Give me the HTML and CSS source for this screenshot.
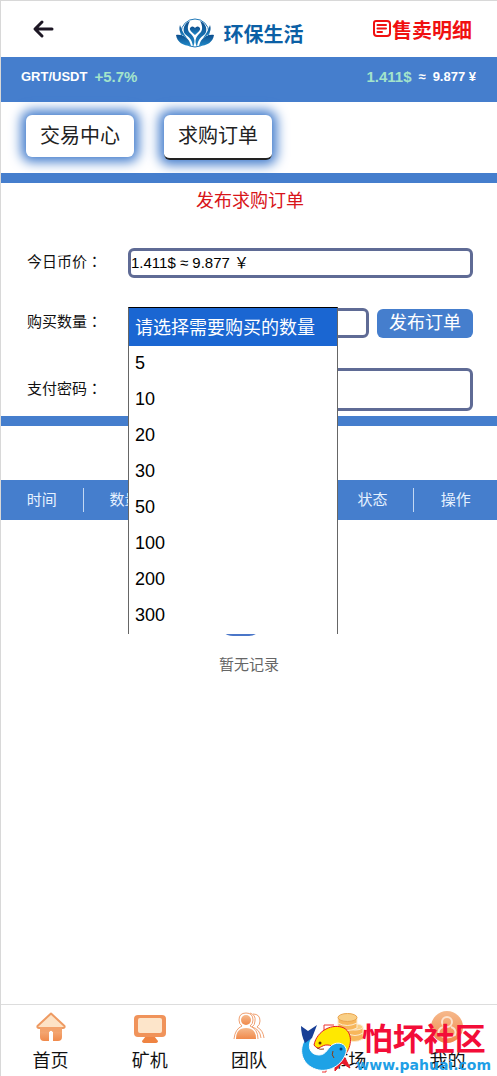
FILE: index.html
```html
<!DOCTYPE html>
<html lang="zh-CN">
<head>
    <meta charset="UTF-8">
    <meta name="viewport" content="width=device-width, initial-scale=1.0">
    <title>求购订单</title>
    <link rel="stylesheet" href="styles.css">
</head>
<body>
    <header class="header">
        <a class="back" href="#" aria-label="返回">
            <svg width="24" height="20" viewBox="0 0 24 20" fill="none" stroke="#1d1724" stroke-width="3" stroke-linecap="round" stroke-linejoin="round">
                <path d="M11 3 L4 10 L11 17 M5 10 H21"/>
            </svg>
        </a>
        <div class="brand">
            <svg width="38" height="32" viewBox="0 0 38 32">
                <defs>
                    <linearGradient id="logoBlue" x1="0" y1="0" x2="0" y2="1">
                        <stop offset="0" stop-color="#0c4d8d"/>
                        <stop offset="1" stop-color="#2089c8"/>
                    </linearGradient>
                </defs>
                <circle cx="19" cy="16" r="14" fill="none" stroke="#1f78b8" stroke-width="1"/>
                <g fill="url(#logoBlue)">
                    <path d="M19 18 C14 14 13 12 14.500 10.500 C16 8.500 18 9.500 19 11 C20 9.500 22 8.500 23.500 10.500 C25 12 24 14 19 18Z"/>
                    <path d="M14 4 C8 6 6 13 9 17 C12 20 16 21 17 30 C20 24 18 20 15 17 C11 14 11 9 14 4Z"/>
                    <path d="M24 4 C30 6 32 13 29 17 C26 20 22 21 21 30 C18 24 20 20 23 17 C27 14 27 9 24 4Z"/>
                    <path d="M0 18 C6 17 13 20 15 29 C7 29 1 25 0 18Z"/>
                    <path d="M38 18 C32 17 25 20 23 29 C31 29 37 25 38 18Z"/>
                    <path d="M4 8 C2 14 5 18 11 21 C8 17 6 14 4 8Z"/>
                    <path d="M34 8 C36 14 33 18 27 21 C30 17 32 14 34 8Z"/>
                </g>
            </svg>
            <span>环保生活</span>
        </div>
        <a class="detail" href="#">
            <svg width="20" height="20" viewBox="0 0 20 20" fill="none" stroke="#f01010" stroke-width="2" stroke-linecap="round">
                <path d="M4 2 H15 Q18 2 18 5 V14 Q18 17 15 17 H5 Q2 17 2 14 V4 Q2 2 4 2Z"/>
                <path d="M5.500 6 H14 M5.500 9.500 H14 M5.500 13 H10"/>
            </svg>
            <span>售卖明细</span>
        </a>
    </header>

    <div class="ticker">
        <span class="pair">GRT/USDT</span>
        <span class="green">+5.7%</span>
        <span class="green price">1.411$</span>
        <span class="cny">≈</span>
        <span class="cny">9.877 ¥</span>
    </div>

    <nav class="tabs">
        <a class="tab" href="#">交易中心</a>
        <a class="tab active" href="#">求购订单</a>
    </nav>

    <form class="order-form">
        <h1>发布求购订单</h1>
        <div class="row">
            <label for="price">今日币价<span class="colon" lang="zh-TW">：</span></label>
            <input id="price" class="field" type="text" value="1.411$ ≈ 9.877 ￥" readonly>
        </div>
        <div class="row">
            <label for="amount">购买数量<span class="colon" lang="zh-TW">：</span></label>
            <div class="amount">
                <select id="amount" class="field">
                    <option value=""></option>
                    <option>5</option>
                    <option>10</option>
                    <option>20</option>
                    <option>30</option>
                    <option>50</option>
                    <option>100</option>
                    <option>200</option>
                    <option>300</option>
                </select>
                <ul class="options" role="listbox" aria-label="购买数量">
                    <li class="selected" role="option" aria-selected="true">请选择需要购买的数量</li>
                    <li role="option">5</li>
                    <li role="option">10</li>
                    <li role="option">20</li>
                    <li role="option">30</li>
                    <li role="option">50</li>
                    <li role="option">100</li>
                    <li role="option">200</li>
                    <li role="option">300</li>
                </ul>
            </div>
            <button class="submit" type="button">发布订单</button>
        </div>
        <div class="row password">
            <label for="password">支付密码<span class="colon" lang="zh-TW">：</span></label>
            <input id="password" class="field" type="password">
        </div>
    </form>

    <main class="records">
        <table>
            <thead>
                <tr>
                    <th><span>时间</span></th>
                    <th><span>数量</span></th>
                    <th></th>
                    <th></th>
                    <th><span>状态</span></th>
                    <th><span>操作</span></th>
                </tr>
            </thead>
        </table>
        <div class="empty">
            <svg width="60" height="60" viewBox="0 0 60 60" fill="#4a76c8">
                <path d="M4 54 H42 Q36 60 30 60 H14 Q8 60 4 56Z"/>
            </svg>
            <p>暂无记录</p>
        </div>
    </main>

    <footer class="tabbar">
        <a href="#">
            <svg width="32" height="32" viewBox="0 0 32 32">
                <defs>
                    <linearGradient id="orange" x1="0" y1="0" x2="0" y2="1">
                        <stop offset="0" stop-color="#f6b98c"/>
                        <stop offset="1" stop-color="#f08a4b"/>
                    </linearGradient>
                </defs>
                <path d="M5 15 H27 V26 Q27 30 23 30 H18 V21 Q16 18 14 21 V30 H9 Q5 30 5 26Z" fill="url(#orange)"/>
                <path d="M16 2.500 L29.500 15 Q30 17 28 17 H4 Q2 17 2.500 15Z" fill="#fde3c6" stroke="#ee9a62" stroke-width="2" stroke-linejoin="round"/>
                <path d="M5 16 H27 V21 H18 Q16 18 14 21 H5Z" fill="#f3a36c"/>
            </svg>
            <span>首页</span>
        </a>
        <a href="#">
            <svg width="32" height="32" viewBox="0 0 32 32">
                <path d="M12 25 H20 L24 30 Q24 32 21 32 H11 Q8 32 8 30Z" fill="#ef8442"/>
                <rect x="0" y="4" width="32" height="22" rx="4" fill="#f0935a"/>
                <rect x="4" y="7" width="24" height="15" rx="2" fill="#fde5ca"/>
            </svg>
            <span>矿机</span>
        </a>
        <a href="#">
            <svg width="32" height="32" viewBox="0 0 32 32">
                <g fill="none" stroke="#f0a071" stroke-width="1">
                    <path d="M20 3 Q27 3 27 10 Q27 14 24 16 Q30 19 31 27"/>
                    <path d="M17 2 Q23 4 22 10 Q22 14 19 16 Q27 18 28 27"/>
                    <path d="M9 15 Q6 13 6 9 Q6 2 13 2 Q20 2 20 9 Q20 13 17 15 Q25 18 25 28 M9 15 Q2 18 1 28"/>
                </g>
                <circle cx="13" cy="9" r="5" fill="url(#orange)"/>
                <path d="M3 28 Q3 17 13 17 Q23 17 23 28Z" fill="url(#orange)"/>
            </svg>
            <span>团队</span>
        </a>
        <a href="#">
            <svg width="32" height="32" viewBox="0 0 32 32" fill="#f7b75b" stroke="#fdebcf" stroke-width="1">
                <path d="M13 22 V28 Q22 33 31 28 V22Z"/>
                <path d="M15 16 V22 Q23 27 31 22 V16Z"/>
                <ellipse cx="23" cy="16" rx="8" ry="3" fill="#f9cf86"/>
                <path d="M6 12 V17 Q15 22 25 17 V12Z"/>
                <path d="M6 7 V12 Q15 17 25 12 V7Z"/>
                <ellipse cx="15.500" cy="6.500" rx="9.500" ry="4" fill="#f9cf86" stroke="#eba54e"/>
            </svg>
            <span>市场</span>
        </a>
        <a href="#">
            <svg width="32" height="32" viewBox="0 0 32 32">
                <circle cx="16" cy="16" r="16" fill="url(#orange)"/>
                <g fill="none" stroke="#fce3ce" stroke-width="2">
                    <circle cx="16" cy="11" r="5"/>
                    <path d="M12 16 Q6 18 8 24 Q16 29 24 24 Q26 18 20 16"/>
                </g>
            </svg>
            <span>我的</span>
        </a>
        <div class="watermark">
            <svg width="54" height="50" viewBox="0 0 54 50">
                <path d="M24 2 H34 M24 2 V10 M26 46 V49 H22" fill="none" stroke="#e33" stroke-width="1"/>
                <path d="M14 22 C17 7 33 0 44 5 C54 11 51 26 44 33 L50 45 L42 40 L35 48 L35 38 C41 31 37 23 28 22 C21 21 19 29 14 22Z" fill="#ffe800" stroke="#e21b23" stroke-width="1"/>
                <path d="M44 33 L50 45 L42 40 L35 48 L35 38 C38 35 39 33 39 30Z" fill="#e8172c"/>
                <path d="M7 14 C-2 24 1 38 11 44 C24 52 41 45 46 30 C48 23 41 18 34 21 C28 23 27 32 19 32 C9 32 7 22 12 15Z" fill="#1ea2e6" stroke="#fff" stroke-width="1"/>
                <path d="M1 3 L8 8 L17 2 L12 15 L5 20 Q1 12 1 3Z" fill="#183f96"/>
                <path d="M24 26 Q20 27 17 25 M33 28 Q31 32 34 35" fill="none" stroke="#8a3a10" stroke-width="1"/>
                <circle cx="20" cy="20" r="1.500" fill="#6b2b05"/>
                <circle cx="41" cy="26" r="1.500" fill="#073f75"/>
            </svg>
            <div class="watermark-text">
                <strong>怕坏社区</strong>
                <span>www.pahuai.com</span>
            </div>
        </div>
    </footer>
</body>
</html>
```
FILE: styles.css
```css
* {
    box-sizing: border-box;
}
body {
    margin: 0;
    min-height: 100vh;
    display: flex;
    flex-direction: column;
    border-top: 1px solid #d8d8d8;
    border-left: 1px solid #d8d8d8;
    background: #fff;
    color: #222;
    font-family: "Liberation Sans", "Noto Sans CJK SC", sans-serif;
    font-size: 15px;
}
a {
    color: inherit;
    text-decoration: none;
}
svg {
    display: block;
    flex-shrink: 0;
}
input, select, button {
    font-family: inherit;
}
.header {
    height: 56px;
    padding: 0 25px 0 30px;
    display: flex;
    justify-content: space-between;
    align-items: center;
}
.back {
    width: 76px;
}
.brand {
    display: flex;
    align-items: center;
    gap: 10px;
    padding-top: 8px;
    color: #0b5fa5;
    font-size: 20px;
    font-weight: bold;
}
.detail {
    display: flex;
    align-items: center;
    color: #f01010;
    font-size: 20px;
    font-weight: bold;
}
.ticker {
    height: 45px;
    padding: 0 21px 6px 20px;
    display: flex;
    align-items: center;
    background: #457ecd;
    color: #fff;
    font-size: 13px;
    font-weight: bold;
}
.green {
    margin-left: 7px;
    color: #a3e4cb;
    font-size: 15px;
}
.price {
    margin-left: auto;
}
.cny {
    margin-left: 7px;
    font-size: 13px;
}
.tabs {
    height: 81px;
    padding: 13px 25px;
    display: flex;
    gap: 30px;
    border-bottom: 10px solid #457ecd;
}
.tab {
    height: 42px;
    padding: 0 14px;
    border-radius: 6px;
    background: #fff;
    box-shadow: 0 0 12px 5px #457ecd;
    font-size: 20px;
    line-height: 42px;
}
.active {
    height: 45px;
    border-bottom: 2px solid #222;
}
.order-form {
    padding: 0 24px 5px 26px;
    border-bottom: 10px solid #457ecd;
}
.order-form h1 {
    margin: 0 0 29px;
    color: #d81419;
    font-size: 18px;
    font-weight: normal;
    line-height: 36px;
    text-align: center;
}
.row {
    display: flex;
    align-items: center;
    margin-bottom: 30px;
}
.row label {
    width: 101px;
    flex-shrink: 0;
    padding-bottom: 5px;
    color: #111;
}
.colon {
    font-family: "Noto Sans CJK TC", sans-serif;
}
.field {
    flex: 1;
    width: 100%;
    min-width: 0;
    height: 30px;
    padding: 0 0 4px;
    border: 3px solid #5f6b95;
    border-radius: 6px;
    background: #fff;
    color: #000;
    font-size: 15px;
    appearance: none;
}
.amount {
    position: relative;
    flex: 1;
    display: flex;
}
.options {
    position: absolute;
    top: -1px;
    left: 0;
    z-index: 1;
    width: 210px;
    margin: 0;
    padding: 0;
    border: 1px solid #666;
    border-top-color: #000;
    border-bottom: 0;
    background: #fff;
    color: #000;
    font-size: 18px;
    line-height: 34px;
    list-style: none;
}
.options li {
    height: 36px;
    padding-left: 6px;
}
.options .selected {
    height: 38px;
    background: #1a66d2;
    color: #fff;
    line-height: 40px;
}
.submit {
    height: 29px;
    margin-left: 8px;
    padding: 0 12px;
    border: 0;
    border-radius: 6px;
    background: #457ecd;
    color: #fff;
    font-size: 18px;
    line-height: 27px;
}
.password {
    margin-bottom: 0;
}
.password .field {
    height: 43px;
}
.records {
    flex: 1;
    padding-top: 54px;
}
table {
    width: 100%;
    border-collapse: collapse;
    table-layout: fixed;
    background: #457ecd;
    color: #e6f1ff;
}
th {
    height: 40px;
    padding: 0;
    font-weight: normal;
}
th span {
    display: block;
    border-right: 1px solid #c3d8f3;
    line-height: 24px;
}
th:last-child span {
    border-right: 0;
}
.empty {
    display: flex;
    flex-direction: column;
    align-items: center;
    padding-top: 56px;
    color: #666;
}
.empty p {
    margin: 17px 0 0;
}
.tabbar {
    position: relative;
    height: 72px;
    display: flex;
    border-top: 1px solid #ddd;
    color: #111;
    font-size: 18px;
}
.tabbar a {
    flex: 1;
    display: flex;
    flex-direction: column;
    align-items: center;
    padding-top: 6px;
}
.tabbar a span {
    margin-top: 3px;
}
.watermark {
    position: absolute;
    right: 6px;
    bottom: 3px;
    display: flex;
    align-items: center;
    gap: 2px;
}
.watermark-text {
    display: flex;
    flex-direction: column;
    align-items: center;
}
.watermark strong {
    color: #f30d38;
    font-size: 31px;
    line-height: 34px;
}
.watermark span {
    color: #1f9fe6;
    font-family: "DejaVu Sans", sans-serif;
    font-size: 14px;
    font-weight: bold;
    line-height: 16px;
}
```
